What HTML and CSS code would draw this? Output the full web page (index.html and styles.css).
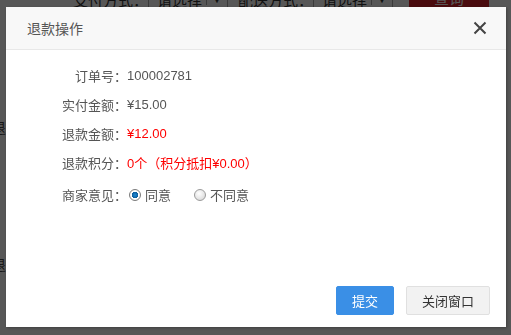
FILE: index.html
```html
<!DOCTYPE html>
<html lang="zh-CN">
<head>
    <meta charset="UTF-8">
    <title>退款操作</title>
    <link rel="stylesheet" href="styles.css">
</head>
<body>
    <div class="page">
        <div class="filter-bar">
            <span class="filter-label">支付方式：</span>
            <span class="fake-select">请选择<i class="arrow">▼</i></span>
            <span class="filter-label">配送方式：</span>
            <span class="fake-select">请选择<i class="arrow">▼</i></span>
            <span class="search-btn">查询</span>
        </div>
        <div class="list">
            <div class="list-row">退款</div>
            <div class="list-row">退款</div>
        </div>
    </div>
    <div class="mask"></div>

    <div class="dialog">
        <div class="dialog-head">
            <span class="dialog-title">退款操作</span>
            <span class="dialog-close">
                <svg width="14" height="14" viewBox="0 0 14 14"><path d="M1.5 1.5 L12.5 12.5 M12.5 1.5 L1.5 12.5" stroke="#444" stroke-width="2" fill="none"/></svg>
            </span>
        </div>
        <div class="dialog-body">
            <div class="row"><span class="label">订单号：</span><span class="value">100002781</span></div>
            <div class="row"><span class="label">实付金额：</span><span class="value">¥15.00</span></div>
            <div class="row"><span class="label">退款金额：</span><span class="value red">¥12.00</span></div>
            <div class="row"><span class="label">退款积分：</span><span class="value red">0个（积分抵扣¥0.00）</span></div>
            <div class="row row-radio">
                <span class="label">商家意见：</span>
                <label class="radio"><span class="dot checked"></span>同意</label>
                <label class="radio"><span class="dot"></span>不同意</label>
            </div>
        </div>
        <div class="dialog-foot">
            <button class="btn btn-primary">提交</button>
            <button class="btn btn-default">关闭窗口</button>
        </div>
    </div>
</body>
</html>
```

FILE: styles.css
```css
/* Global */
body {
    margin: 0;
    padding: 0;
    height: 100vh;
    overflow: hidden;
    font-family: "Liberation Sans", "Noto Sans CJK SC", sans-serif;
    font-size: 13px;
    color: #555;
    background: #fff;
}

/* Page behind the mask */
.page {
    padding-left: 73px;
}

.filter-bar {
    display: flex;
    align-items: center;
    margin-top: -13px;
    height: 24px;
    font-size: 15px;
    color: #333;
}

.fake-select {
    display: flex;
    align-items: center;
    justify-content: space-between;
    width: 70px;
    height: 22px;
    padding-left: 8px;
    margin-right: 10px;
    border: 1px solid #aaa;
    background: #fff;
}

.arrow {
    font-style: normal;
    font-size: 11px;
    width: 20px;
    text-align: center;
    border-left: 1px solid #aaa;
}

.search-btn {
    margin-left: 6px;
    width: 80px;
    height: 30px;
    line-height: 30px;
    text-align: center;
    background: #d9222a;
    color: #fff;
}

.list {
    margin-left: -82px;
    padding-top: 106px;
    font-size: 15px;
    color: #444;
}

.list-row {
    height: 137px;
}

.list-row:last-child {
    height: auto;
}

.mask {
    position: fixed;
    top: 0;
    left: 0;
    width: 100%;
    height: 100%;
    background: rgba(0, 0, 0, 0.66);
}

/* Dialog */
.dialog {
    position: fixed;
    left: 6px;
    top: 7px;
    width: 500px;
    height: 320px;
    background: #fff;
    display: flex;
    flex-direction: column;
    box-shadow: 1px 1px 3px rgba(0, 0, 0, 0.3);
}

.dialog-head {
    display: flex;
    align-items: center;
    justify-content: space-between;
    height: 42px;
    padding: 0 19px 0 21px;
    background: #f8f8f8;
    border-bottom: 1px solid #e8e8e8;
}

.dialog-title {
    font-size: 14px;
    color: #555;
}

.dialog-close {
    display: flex;
}

.dialog-body {
    padding-top: 11px;
}

.row {
    display: flex;
    align-items: center;
    height: 29px;
}

.row-radio {
    margin-top: 3px;
}

.label {
    width: 121px;
    text-align: right;
    color: #555;
}

.value {
    color: #555;
}

.red {
    color: #f00;
}

.radio {
    display: flex;
    align-items: center;
    margin-right: 21px;
    color: #555;
}

.dot {
    width: 12px;
    height: 12px;
    margin: 0 4px 0 2px;
    border-radius: 50%;
    border: 1px solid #9a9a9a;
    background: radial-gradient(circle at 40% 35%, #fff 0%, #e4e4e4 60%, #cfcfcf 100%);
    box-sizing: border-box;
}

.dot.checked {
    border-color: #7a7a7a;
    background: radial-gradient(circle at 50% 50%, #1f8ad6 0, #0a5d9c 3px, #fff 3.5px, #f0f0f0 100%);
}

.dialog-foot {
    margin-top: auto;
    display: flex;
    justify-content: flex-end;
    gap: 12px;
    padding: 0 16px 12px 0;
}

.btn {
    height: 29px;
    padding: 0 15px;
    font-family: inherit;
    font-size: 13px;
    border-radius: 2px;
    cursor: pointer;
}

.btn-primary {
    background: #3a8fe6;
    border: 1px solid #3a8fe6;
    color: #fff;
}

.btn-default {
    background: #f2f2f2;
    border: 1px solid #e0e0e0;
    color: #333;
}
```
